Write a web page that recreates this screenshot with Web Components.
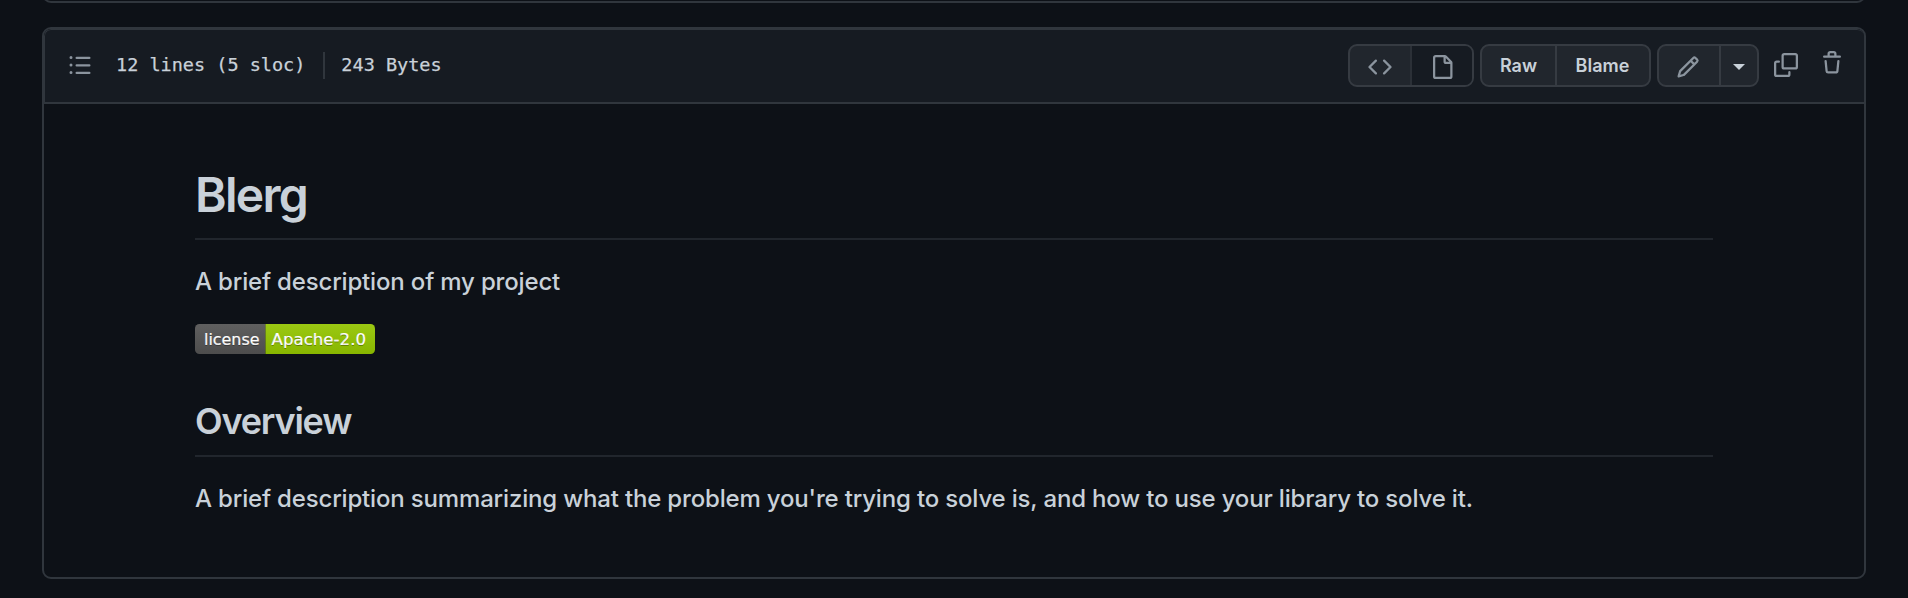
<!DOCTYPE html>
<html lang="en">
<head>
<meta charset="utf-8">
<title>README.md</title>
<style>
html, body {
  margin: 0;
  height: 100%;
  overflow: hidden;
}

body {
  background: #0d1117;
  color: #c9d1d9;
  font-family: Inter, "Liberation Sans", sans-serif;
}
</style>
</head>
<body>
<blob-page>
  <file-box>
    <file-info slot="info">
      <span>12 lines (5 sloc)</span>
      <span>243 Bytes</span>
    </file-info>
    <file-actions slot="actions"></file-actions>
    <markdown-body>
      <md-heading level="1">Blerg</md-heading>
      <md-text>A brief description of my project</md-text>
      <license-badge label="license" value="Apache-2.0"></license-badge>
      <md-heading level="2">Overview</md-heading>
      <md-text>A brief description summarizing what the problem you're trying to solve is, and how to use your library to solve it.</md-text>
    </markdown-body>
  </file-box>
</blob-page>

<script>
const icons = {
  list: "M2 4a1 1 0 100-2 1 1 0 000 2zm3.75-1.5a.75.75 0 000 1.5h8.5a.75.75 0 000-1.5h-8.5zm0 5a.75.75 0 000 1.5h8.5a.75.75 0 000-1.5h-8.5zm0 5a.75.75 0 000 1.5h8.5a.75.75 0 000-1.5h-8.5zM3 8a1 1 0 11-2 0 1 1 0 012 0zm-1 6a1 1 0 100-2 1 1 0 000 2z",
  code: "M4.72 3.22a.75.75 0 011.06 1.06L2.06 8l3.72 3.72a.75.75 0 11-1.06 1.06L.47 8.53a.75.75 0 010-1.06l4.25-4.25zm6.56 0a.75.75 0 10-1.06 1.06L13.94 8l-3.72 3.72a.75.75 0 101.06 1.06l4.25-4.25a.75.75 0 000-1.06l-4.25-4.25z",
  file: "M3.75 1.5a.25.25 0 00-.25.25v12.5c0 .138.112.25.25.25h9.5a.25.25 0 00.25-.25V6h-2.75A1.75 1.75 0 019 4.25V1.5H3.75zm6.75.56v2.19c0 .138.112.25.25.25h2.19L10.5 2.06zM2 1.75C2 .784 2.784 0 3.75 0h6.086c.464 0 .909.184 1.237.513l3.414 3.414c.329.328.513.773.513 1.237v9.086A1.75 1.75 0 0113.25 16h-9.5A1.75 1.75 0 012 14.25V1.75z",
  pencil: "M11.013 1.427a1.75 1.75 0 012.474 0l1.086 1.086a1.75 1.75 0 010 2.474l-8.61 8.61c-.21.21-.47.364-.756.445l-3.251.93a.75.75 0 01-.927-.928l.929-3.25a1.75 1.75 0 01.445-.758l8.61-8.61zm1.414 1.06a.25.25 0 00-.354 0L10.811 3.75l1.439 1.44 1.263-1.263a.25.25 0 000-.354l-1.086-1.086zM11.189 6.25L9.75 4.81l-6.286 6.287a.25.25 0 00-.064.108l-.558 1.953 1.953-.558a.249.249 0 00.108-.064l6.286-6.286z",
  copy: "M0 6.75C0 5.784.784 5 1.75 5h1.5a.75.75 0 010 1.5h-1.5a.25.25 0 00-.25.25v7.5c0 .138.112.25.25.25h7.5a.25.25 0 00.25-.25v-1.5a.75.75 0 011.5 0v1.5A1.75 1.75 0 019.25 16h-7.5A1.75 1.75 0 010 14.25v-7.5zM5 1.75C5 .784 5.784 0 6.75 0h7.5C15.216 0 16 .784 16 1.75v7.5A1.75 1.75 0 0114.25 11h-7.5A1.75 1.75 0 015 9.25v-7.5zm1.75-.25a.25.25 0 00-.25.25v7.5c0 .138.112.25.25.25h7.5a.25.25 0 00.25-.25v-7.5a.25.25 0 00-.25-.25h-7.5z",
  trash: "M6.5 1.75a.25.25 0 01.25-.25h2.5a.25.25 0 01.25.25V3h-3V1.75zm4.5 0V3h2.25a.75.75 0 010 1.5H2.75a.75.75 0 010-1.5H5V1.75C5 .784 5.784 0 6.75 0h2.5C10.216 0 11 .784 11 1.75zM4.496 6.675a.75.75 0 10-1.492.15l.66 6.6A1.75 1.75 0 005.405 15h5.19c.9 0 1.652-.681 1.741-1.576l.66-6.6a.75.75 0 00-1.492-.149l-.66 6.6a.25.25 0 01-.249.225h-5.19a.25.25 0 01-.249-.225l-.66-6.6z",
};

class BaseElement extends HTMLElement {
  constructor() {
    super();
    this.attachShadow({mode: "open"});
  }

  connectedCallback() {
    this.shadowRoot.innerHTML = this.render();
  }
}

class OctIcon extends BaseElement {
  render() {
    return `
<style>
:host { display: block; width: 24px; height: 24px; color: #8b949e; }
svg { display: block; width: 100%; height: 100%; fill: currentColor; }
</style>
<svg viewBox="0 0 16 16" aria-hidden="true"><path fill-rule="evenodd" d="${icons[this.getAttribute("name")]}"/></svg>`;
  }
}

class BlobPage extends BaseElement {
  render() {
    return `
<style>
:host { display: flex; flex-direction: column; gap: 24px; padding: 0 42px; }
.commit { height: 3px; overflow: hidden; display: flex; align-items: flex-end; }
.commit div {
  flex: 1;
  box-sizing: border-box;
  height: 20px;
  border: 2px solid #30363d;
  border-radius: 9px;
}
</style>
<div class="commit"><div></div></div>
<slot></slot>`;
  }
}

class FileBox extends BaseElement {
  render() {
    return `
<style>
:host {
  display: block;
  box-sizing: border-box;
  height: 552px;
  border: 2px solid #30363d;
  border-radius: 9px;
  overflow: hidden;
}
header {
  box-sizing: border-box;
  display: flex;
  align-items: center;
  justify-content: space-between;
  height: 75px;
  padding: 0 20px 1px 23px;
  background: #161b22;
  border: solid #30363d;
  border-width: 1px 0 2px 1px;
  border-radius: 7px 7px 0 0;
}
</style>
<header>
  <slot name="info"></slot>
  <slot name="actions"></slot>
</header>
<slot></slot>`;
  }
}

class FileInfo extends BaseElement {
  render() {
    return `
<style>
:host {
  display: flex;
  align-items: center;
  font: 18.5px/26px "DejaVu Sans Mono", monospace;
  white-space: nowrap;
  -webkit-text-stroke: .25px;
}
oct-icon { margin: 0 24px 1px 0; }
::slotted(span) { height: 27px; }
::slotted(span:first-of-type) {
  padding-right: 18px;
  border-right: 2px solid #30363d;
}
::slotted(span:last-of-type) { padding-left: 16px; }
</style>
<oct-icon name="list"></oct-icon>
<slot></slot>`;
  }
}

class BtnGroup extends BaseElement {
  render() {
    return `
<style>
:host {
  display: flex;
  box-sizing: border-box;
  height: 43px;
  border: 2px solid #363b42;
  border-radius: 9px;
  background: #21262d;
  overflow: hidden;
}
::slotted(button) {
  box-sizing: border-box;
  display: flex;
  align-items: center;
  justify-content: center;
  padding: 0;
  border: 0;
  background: none;
  color: #c9d1d9;
  font: 600 18px/30px Inter, sans-serif;
}
::slotted(button:not(:first-of-type)) { border-left: 2px solid #363b42; }
::slotted(button.selected) {
  background: #161b22;
  border-left-color: #2b3037;
}
</style>
<slot></slot>`;
  }
}

class FileActions extends BaseElement {
  render() {
    return `
<style>
:host { display: flex; align-items: flex-start; gap: 6px; height: 43px; }
.view { width: 126px; }
.view button:first-child { width: 60px; }
.view button:last-child { width: 62px; }
.raw { width: 171px; }
.raw button:first-child { width: 73px; }
.raw button:last-child { width: 94px; padding-right: 1px; }
.edit { width: 102px; }
.edit button:first-child { width: 60px; padding-right: 2px; }
.edit button:last-child { width: 38px; }
.view oct-icon { margin-top: 3px; }
.pencil { margin-top: 3px; }
.caret {
  margin-top: 3px;
  border: 6px solid transparent;
  border-top-color: currentColor;
  border-bottom: 0;
}
.copy { margin: 9px 0 0 9px; }
.trash { margin: 7px 0 0 16px; }
</style>
<btn-group class="view">
  <button aria-label="Source"><oct-icon name="code"></oct-icon></button>
  <button class="selected" aria-label="Rendered"><oct-icon name="file"></oct-icon></button>
</btn-group>
<btn-group class="raw"><button>Raw</button><button>Blame</button></btn-group>
<btn-group class="edit">
  <button aria-label="Edit"><oct-icon class="pencil" name="pencil"></oct-icon></button>
  <button aria-label="More"><span class="caret"></span></button>
</btn-group>
<oct-icon class="copy" name="copy"></oct-icon>
<oct-icon class="trash" name="trash"></oct-icon>`;
  }
}

class MarkdownBody extends BaseElement {
  render() {
    return `
<style>
:host { display: block; padding: 61px 151px 0; }
</style>
<slot></slot>`;
  }
}

class MdHeading extends BaseElement {
  render() {
    const level = this.getAttribute("level");
    return `
<style>
:host { display: block; margin-bottom: 24px; border-bottom: 2px solid #21262d; }
:host([level="2"]) { margin-top: 45px; }
h1, h2 { margin: 0; font-weight: 630; }
h1 { height: 73px; font-size: 48px; line-height: 60px; letter-spacing: -1.7px; }
h2 { height: 56px; font-size: 36px; line-height: 45px; letter-spacing: -1.2px; }
</style>
<h${level}><slot></slot></h${level}>`;
  }
}

class MdText extends BaseElement {
  render() {
    return `
<style>
:host { display: block; margin-bottom: 24px; }
p {
  margin: 0;
  font-size: 24px;
  font-weight: 450;
  line-height: 36px;
  letter-spacing: -.17px;
  white-space: nowrap;
}
</style>
<p><slot></slot></p>`;
  }
}

class LicenseBadge extends BaseElement {
  render() {
    const label = this.getAttribute("label");
    const value = this.getAttribute("value");
    return `
<style>
:host { display: block; height: 30px; }
svg { display: block; }
text {
  fill: #fff;
  stroke: #fff;
  stroke-width: .15px;
  font: 11px "DejaVu Sans", sans-serif;
  text-shadow: 0 1px 0 rgba(1, 1, 1, .3);
}
</style>
<svg width="180" height="30" viewBox="0 0 120 20">
  <linearGradient id="shine" x2="0" y2="100%">
    <stop offset="0" stop-color="#bbb" stop-opacity=".1"/>
    <stop offset="1" stop-opacity=".1"/>
  </linearGradient>
  <clipPath id="round"><rect width="120" height="20" rx="3"/></clipPath>
  <g clip-path="url(#round)">
    <rect width="47" height="20" fill="#555"/>
    <rect x="47" width="73" height="20" fill="#97ca00"/>
    <rect width="120" height="20" fill="url(#shine)"/>
  </g>
  <text x="6" y="14" textLength="37" lengthAdjust="spacingAndGlyphs">${label}</text>
  <text x="51" y="14" textLength="63" lengthAdjust="spacingAndGlyphs">${value}</text>
</svg>`;
  }
}

customElements.define("oct-icon", OctIcon);
customElements.define("blob-page", BlobPage);
customElements.define("file-box", FileBox);
customElements.define("file-info", FileInfo);
customElements.define("btn-group", BtnGroup);
customElements.define("file-actions", FileActions);
customElements.define("markdown-body", MarkdownBody);
customElements.define("md-heading", MdHeading);
customElements.define("md-text", MdText);
customElements.define("license-badge", LicenseBadge);
</script>
</body>
</html>
